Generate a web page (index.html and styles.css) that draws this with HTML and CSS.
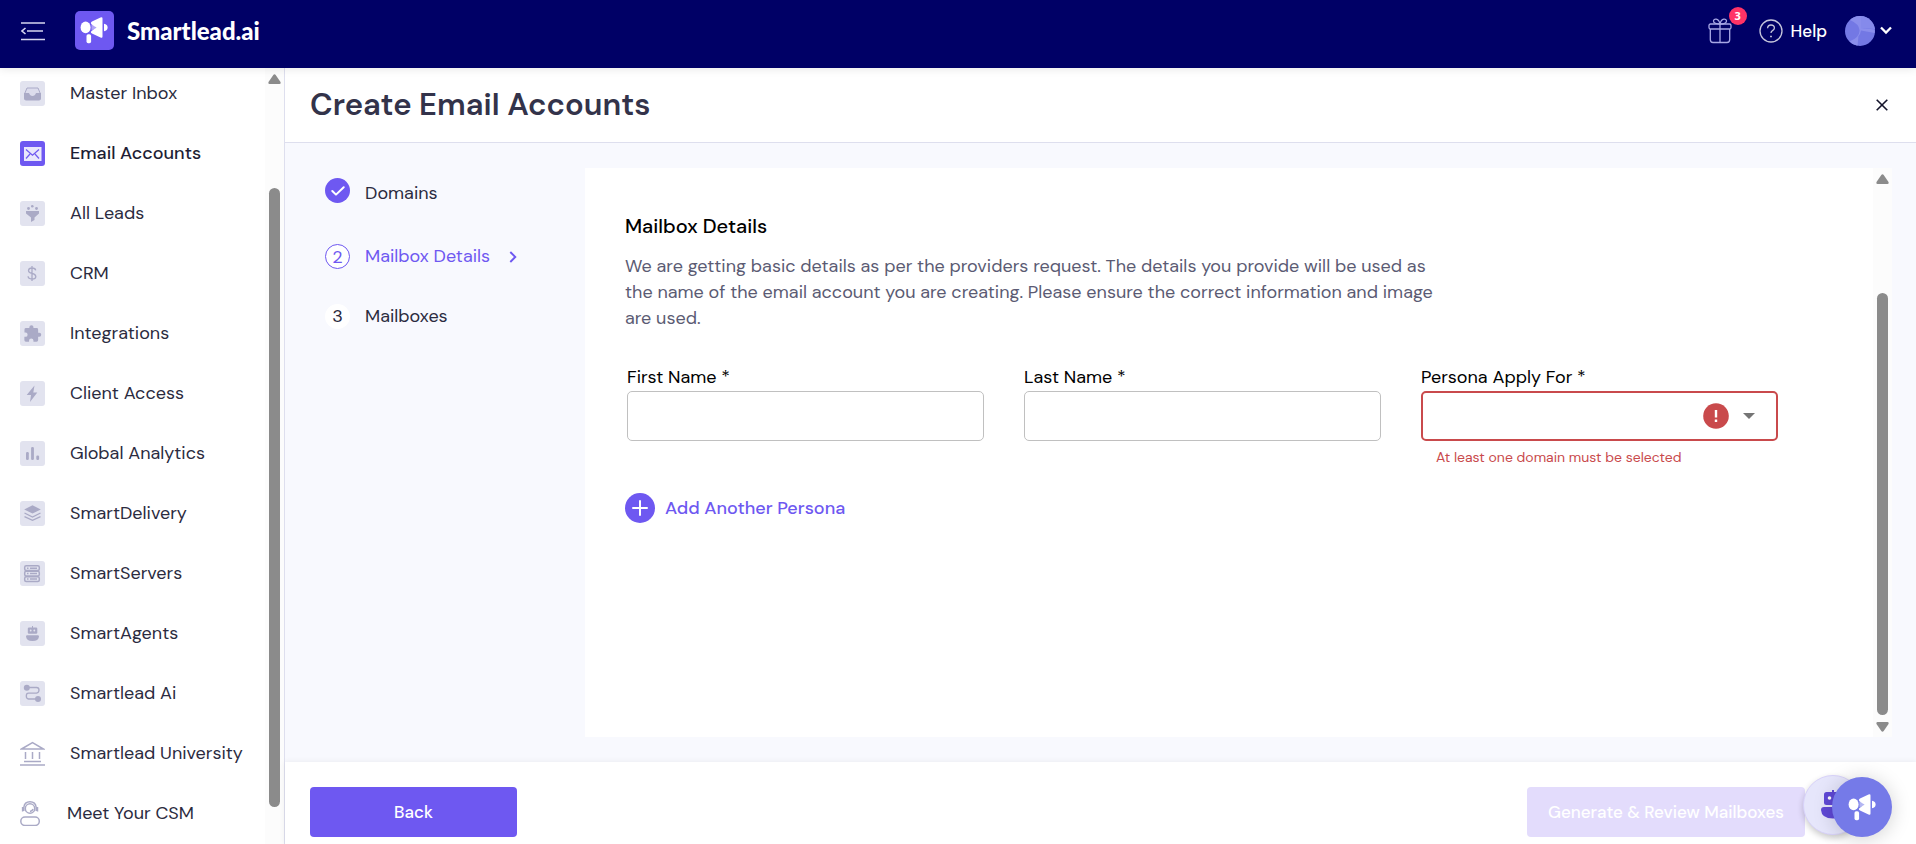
FILE: index.html
```html
<!DOCTYPE html>
<html lang="en">
<head>
<meta charset="utf-8">
<title>Create Email Accounts</title>
<link rel="stylesheet" href="styles.css">
</head>
<body>
<svg class="defs" aria-hidden="true">
  <symbol id="megaphone" viewBox="0 0 28 28">
    <ellipse cx="5.600" cy="11.400" rx="5" ry="5.900"/>
    <path d="M20.500 1.500Q22.500.5 22.500 2.500V20.500Q22.500 22.500 20.500 21.500L12 17.500Q10.500 16.700 11 15.700Q11.500 14.800 16.500 11.600Q11.500 8.500 11 7.400Q10.700 6.400 12 5.600Z"/>
    <path d="M11.500 8.500Q14 7.500 16.500 11.200Q14 14.500 11.500 13.800Z" opacity=".45"/>
    <path d="M24 7.800Q27.600 8.300 27.600 11.500T24 15.300Z"/>
    <rect x="6.500" y="18.200" width="4.600" height="9" rx="1.700"/>
  </symbol>
</svg>
<header class="topbar">
  <div class="topbar-left">
    <button class="plain" type="button" aria-label="Collapse menu">
      <svg width="24" height="20" viewBox="0 0 24 20" fill="none" stroke="#d5d5f0" stroke-width="1.600"><path d="M0 2H24M6 10H22M0 18.500H24M4.500 7 1 10 4.500 13"/></svg>
    </button>
    <a class="brand" href="#">
      <span class="brand-mark"><svg width="28" height="28" fill="#fff"><use href="#megaphone"/></svg></span>
      <span>Smartlead.ai</span>
    </a>
  </div>
  <div class="topbar-right">
    <button class="plain gift" type="button" aria-label="Rewards">
      <svg width="24" height="26" viewBox="0 0 24 26" fill="none" stroke="#a8a8e6" stroke-width="1.300"><rect x="1" y="6" width="22" height="5" rx="1.500"/><path d="M2.300 11V21.500Q2.300 24.500 5 24.500H19Q21.700 24.500 21.700 21.500V11M12 6V24.500M12 6C8 6 5.500 5 5.500 3C5.500 .5 10.500-.5 12 6C13.500-.5 18.500 .5 18.500 3C18.500 5 16 6 12 6"/></svg>
      <span class="badge">3</span>
    </button>
    <a class="help" href="#">
      <svg width="24" height="24" viewBox="0 0 24 24" fill="none" stroke="#c6c6dc" stroke-width="1.300"><circle cx="12" cy="12" r="11"/><path d="M8.600 9.300Q8.700 6 12 6T15.400 9Q15.400 10.600 13.500 11.600Q12 12.400 12 14"/><path d="M12 16.700V18.200" stroke-width="1.800"/></svg>
      <span>Help</span>
    </a>
    <button class="plain account" type="button" aria-label="Account">
      <svg width="30" height="30" viewBox="0 0 30 30"><circle cx="15" cy="15" r="15" fill="#7378e4"/><path d="M5 4A15 15 0 0 1 16 0V12L29.700 13.500V17L16 14.500Q15.500 18 13.500 20L12.500 29.800Q8 29 4.500 25.500Q15 21 14.500 14Q14 8 5 4Z" fill="#8a8eec"/><path d="M16 0A15 15 0 0 1 30 13L16 12Z" fill="#858aeb"/></svg>
      <svg width="12" height="9" viewBox="0 0 12 9" fill="none" stroke="#fff" stroke-width="2.300"><path d="M1 1.500 6 6.500 11 1.500"/></svg>
    </button>
  </div>
</header>
<div class="shell">
  <aside class="sidebar">
    <nav class="menu" aria-label="Main">
      <a href="#"><span class="tile"><svg viewBox="0 0 25 25"><path d="M7 7H18L20.500 13V17.500Q20.500 19 19 19H6Q4.500 19 4.500 17.500V13Z" fill="#dcdcec" stroke="#aaaac8"/><path d="M4 12H9Q10 15 12.500 15T16 12H21V17Q21 19 19 19H6Q4 19 4 17Z"/></svg></span>Master Inbox</a>
      <a href="#" class="current" aria-current="page"><span class="tile"><svg viewBox="0 0 25 25"><rect x="4" y="6" width="17.500" height="14" fill="#e9e7fc"/><path d="M6 8.500 12.500 14.300 19 8.500M6 17.500 10 13M19 17.500 15 13" fill="none" stroke="#6e58f1" stroke-width="1.200"/></svg></span>Email Accounts</a>
      <a href="#"><span class="tile"><svg viewBox="0 0 25 25"><path d="M6 10H19V12.500L14.500 16.500V19L11 21V16.500L6 12.500Z"/><circle cx="8.500" cy="7.500" r="1.400"/><circle cx="12.300" cy="5.200" r="1.300"/><circle cx="16.500" cy="7.500" r="1.400"/></svg></span>All Leads</a>
      <a href="#"><span class="tile"><svg viewBox="0 0 25 25"><path d="M15.700 9.300Q15.300 7 12 7T8.500 9.500Q8.500 11.700 12 12.400T15.800 15.400Q15.800 18 12 18T8.100 15.300M12 5V20" fill="none" stroke="#aaaac6" stroke-width="1.300"/></svg></span>CRM</a>
      <a href="#"><span class="tile"><svg viewBox="0 0 24 24"><path d="M18.500 11.200H17.400V8.200Q17.400 6.800 16 6.800H12.900V5.800Q12.900 4 11 4T9 5.800V6.800H5.800Q4.300 6.800 4.300 8.200V11H5.300Q7.300 11 7.300 13.100T5.300 15.200H4.200V18.300Q4.200 19.800 5.700 19.800H8.700V18.700Q8.700 16.700 10.800 16.700T12.900 18.700V19.800H15.900Q17.400 19.800 17.400 18.300V15.200H18.500Q20.400 15.200 20.400 13.200T18.500 11.200Z"/></svg></span>Integrations</a>
      <a href="#"><span class="tile"><svg viewBox="0 0 25 25"><path d="M14.500 4.500 6.700 14H11L10 21 17.300 11.500H13.300Z"/></svg></span>Client Access</a>
      <a href="#"><span class="tile"><svg viewBox="0 0 25 25"><rect x="6" y="11" width="2.800" height="8" rx="1.200"/><rect x="11.100" y="6" width="2.800" height="13" rx="1.200"/><rect x="16.300" y="14.500" width="2.800" height="4.500" rx="1.200"/></svg></span>Global Analytics</a>
      <a href="#"><span class="tile"><svg viewBox="0 0 25 25"><path d="M12.500 4.300 20.800 8.400 12.500 12.600 4.200 8.400Z"/><path d="M4.500 12 12.500 16 20.500 12M4.500 15.700 12.500 19.400 20.500 15.700" fill="none" stroke="#aaaac6" stroke-width="1.300"/></svg></span>SmartDelivery</a>
      <a href="#"><span class="tile"><svg viewBox="0 0 25 25"><g fill="none" stroke="#aaaac6" stroke-width="1.500"><rect x="4.700" y="4.800" width="14.600" height="4.600" rx="1.500"/><rect x="4.700" y="10.300" width="14.600" height="4.600" rx="1.500"/><rect x="4.700" y="15.800" width="14.600" height="4.600" rx="1.500"/><path d="M7 7.200H8.500M10 7.200H17M7 12.600H8.500M10 12.600H17M7 18.100H8.500M10 18.100H17"/></g></svg></span>SmartServers</a>
      <a href="#"><span class="tile"><svg viewBox="0 0 25 25"><rect x="7.800" y="6.500" width="9.500" height="6.200" rx="1.200"/><path d="M12 5H13V7H12ZM6 15.500Q6 14.200 7.300 14.200H17.700Q19 14.200 19 15.500Q18.500 20 12.500 20T6 15.500Z"/><circle cx="10.700" cy="9.500" r=".9" fill="#e2e3ef"/><circle cx="14.300" cy="9.500" r=".9" fill="#e2e3ef"/></svg></span>SmartAgents</a>
      <a href="#"><span class="tile"><svg viewBox="0 0 25 25"><circle cx="6.800" cy="6.800" r="3"/><circle cx="18" cy="18" r="3"/><path d="M8 6.500H16.500Q19 6.500 19 9T16.500 12.200H8.500Q6.300 12.200 6.300 15T8.500 18H17" fill="none" stroke="#aaaac6" stroke-width="1.300"/></svg></span>Smartlead Ai</a>
      <a href="#"><svg class="outline" viewBox="0 0 25 25"><path d="M1.500 8 12.500 1.500 23.500 8ZM5.500 11V18M12.500 11V18M19.500 11V18M4 20.500H21M0 24H25"/></svg>Smartlead University</a>
      <a href="#" class="csm"><svg class="outline" viewBox="0 0 25 25"><rect x=".8" y="16" width="18.500" height="8.500" rx="4.200"/><circle cx="10" cy="7.500" r="4.700"/><path d="M3.800 10V6.500Q4.500 .8 10 .8T16.200 6.500V10M2.600 6V10.500M17.500 6V10.500M10 10.500Q12.500 10 13 8"/></svg>Meet Your CSM</a>
    </nav>
    <div class="scroll sidebar-scroll" aria-hidden="true">
      <svg width="13" height="10" viewBox="0 0 13 10"><path d="M5.300 1Q6.500-.5 7.700 1L12.500 8Q13 10 11.500 10H1.500Q0 10 .5 8Z"/></svg>
      <span class="space"></span><span class="thumb"></span><span class="rest"></span>
    </div>
  </aside>
  <main class="page">
    <div class="page-head">
      <h1>Create Email Accounts</h1>
      <button class="plain" type="button" aria-label="Close"><svg width="12" height="12" viewBox="0 0 12 12" fill="none" stroke="#14142b" stroke-width="1.600"><path d="M.7.7 11.300 11.300M11.300.7.7 11.300"/></svg></button>
    </div>
    <div class="page-body">
      <ol class="steps">
        <li class="complete"><span class="dot"><svg width="14" height="10" viewBox="0 0 14 10" fill="none" stroke="#fff" stroke-width="2" stroke-linecap="round" stroke-linejoin="round"><path d="M1.300 5 5 8.600 12.700 1.200"/></svg></span>Domains</li>
        <li class="active" aria-current="step"><span class="dot">2</span>Mailbox Details<svg class="arrow" width="8" height="12" viewBox="0 0 8 12" fill="none" stroke="#6e58f1" stroke-width="1.900"><path d="M1.300 1 6.300 6 1.300 11"/></svg></li>
        <li><span class="dot">3</span>Mailboxes</li>
      </ol>
      <section class="card">
        <form class="details" id="details">
          <h2>Mailbox Details</h2>
          <p>We are getting basic details as per the providers request. The details you provide will be used as the name of the email account you are creating. Please ensure the correct information and image are used.</p>
          <div class="fields">
            <div class="field"><label for="first">First Name *</label><input id="first" type="text"></div>
            <div class="field"><label for="last">Last Name *</label><input id="last" type="text"></div>
            <div class="field error">
              <label for="persona">Persona Apply For *</label>
              <div class="select">
                <select id="persona" aria-invalid="true" aria-describedby="persona-error"><option></option></select>
                <span class="marks"><svg width="26" height="26" viewBox="0 0 26 26"><circle cx="13" cy="13" r="12.800" fill="#c94a4c"/><path d="M11.800 7H14.200V14.500H11.800ZM11.800 16.500H14.200V19H11.800Z" fill="#fff"/></svg><svg width="12" height="6" viewBox="0 0 12 6"><path d="M0 0H12L6 6Z" fill="#757575"/></svg></span>
              </div>
              <span class="hint" id="persona-error">At least one domain must be selected</span>
            </div>
          </div>
          <button class="plain add" type="button"><svg width="30" height="30" viewBox="0 0 30 30"><circle cx="15" cy="15" r="15" fill="#6e58f1"/><path d="M8 15H22M15 8V22" stroke="#fff" stroke-width="2" stroke-linecap="round"/></svg>Add Another Persona</button>
        </form>
        <div class="scroll card-scroll" aria-hidden="true">
          <svg width="13" height="10" viewBox="0 0 13 10"><path d="M5.300 1Q6.500-.5 7.700 1L12.500 8Q13 10 11.500 10H1.500Q0 10 .5 8Z"/></svg>
          <span class="space"></span><span class="thumb"></span>
          <svg width="13" height="10" viewBox="0 0 13 10"><path d="M5.300 9Q6.500 10.500 7.700 9L12.500 2Q13 0 11.500 0H1.500Q0 0 .5 2Z"/></svg>
        </div>
      </section>
    </div>
    <footer class="actions">
      <button class="btn back" type="button">Back</button>
      <button class="btn next" type="submit" form="details" disabled>Generate &amp; Review Mailboxes</button>
    </footer>
  </main>
</div>
<button class="fab robot" type="button" aria-label="Assistant"><svg width="30" height="30" viewBox="0 0 30 30" fill="#5f48d6"><rect x="6" y="2" width="18" height="13" rx="2.500"/><path d="M14 0H16V3H14ZM3 20Q3 17 6 17H24Q27 17 27 20Q26.500 28.500 15 28.500T3 20Z"/><circle cx="11.500" cy="8" r="1.800" fill="#fff"/><circle cx="19" cy="8" r="1.800" fill="#fff"/></svg></button>
<button class="fab news" type="button" aria-label="Announcements"><svg width="28" height="28" fill="#fff"><use href="#megaphone"/></svg></button>
</body>
</html>
```
FILE: styles.css
```css
* { box-sizing: border-box; }
html, body { height: 100%; }
body {
  margin: 0;
  display: flex;
  flex-direction: column;
  overflow: hidden;
  font-family: "DM Sans", Inter, "Liberation Sans", sans-serif;
  font-size: 18px;
  line-height: 26px;
  color: #2b2b40;
  background: #fff;
}
svg { display: block; flex: none; }
a { color: inherit; text-decoration: none; }
button, input, select { font: inherit; color: inherit; }
h1, h2, p, ol { margin: 0; padding: 0; }
.defs { position: absolute; width: 0; height: 0; }
.plain { padding: 0; border: 0; background: none; }

.topbar {
  position: relative;
  flex: none;
  height: 68px;
  padding: 0 24px 7px 21px;
  display: flex;
  align-items: center;
  justify-content: space-between;
  background: #000066;
  color: #fff;
  box-shadow: 0 2px 8px rgba(0, 0, 0, .08);
}
.topbar-left { display: flex; align-items: center; gap: 30px; }
.brand { display: flex; align-items: center; gap: 13px; font-family: Lato, sans-serif; font-weight: 900; font-size: 24px; }
.brand-mark { width: 39px; height: 39px; padding: 5px; border-radius: 5px; background: #6e58f1; }
.topbar-right { display: flex; align-items: center; }
.gift { position: relative; }
.badge {
  position: absolute;
  top: -11px;
  right: -15px;
  width: 18px;
  height: 18px;
  border-radius: 50%;
  background: #ff3366;
  font: 700 11px/18px "Open Sans", sans-serif;
  text-align: center;
}
.help { display: flex; align-items: center; gap: 8px; margin: 0 18px 0 27px; font-weight: 500; font-size: 17px; }
.account { display: flex; align-items: center; gap: 5px; }

.shell { flex: 1; min-height: 0; display: flex; }
.sidebar { flex: none; width: 285px; display: flex; border-right: 1px solid #dedfee; overflow: hidden; }
.menu { flex: 1; padding: 13px 0 0 20px; display: flex; flex-direction: column; gap: 35px; }
.menu a { flex: none; height: 25px; display: flex; align-items: center; gap: 25px; line-height: 25px; white-space: nowrap; }
.menu .csm { gap: 22px; }
.menu .current { font-weight: 500; color: #1e1e35; }
.tile { width: 25px; height: 25px; border-radius: 3px; background: #e2e3ef; fill: #aaaac6; }
.current .tile { background: #6e58f1; }
.tile svg, .outline { width: 25px; height: 25px; }
.outline { fill: none; stroke: #aaaac6; stroke-width: 1.500; }

.scroll { flex: none; width: 19px; display: flex; flex-direction: column; align-items: center; padding: 6px 0; background: #fcfcfc; fill: #8b8b8b; }
.thumb { width: 11px; border-radius: 6px; background: #8b8b8b; }
.sidebar-scroll .space { flex: 104; }
.sidebar-scroll .thumb { flex: 619; }
.sidebar-scroll .rest { flex: 31; }
.card-scroll { padding-bottom: 5px; }
.card-scroll .space { flex: 109; }
.card-scroll .thumb { flex: 422; margin-bottom: 7px; }

.page { flex: 1; min-width: 0; display: flex; flex-direction: column; }
.page-head { flex: none; height: 75px; padding: 0 28px 0 25px; display: flex; align-items: center; justify-content: space-between; border-bottom: 1px solid #dedfee; }
h1 { font-size: 31px; line-height: 40px; font-weight: 600; color: #33334a; }
.page-body { flex: 1; min-height: 0; padding: 25px 24px 25px 0; display: flex; background: #f8f9fe; }
.steps { flex: none; width: 300px; padding: 10px 0 0 40px; list-style: none; }
.steps li { height: 25px; margin-bottom: 35px; display: flex; align-items: center; gap: 15px; line-height: 25px; }
.steps .complete { height: 30px; margin-bottom: 36px; align-items: flex-start; line-height: 30px; }
.steps .active { color: #6e58f1; }
.dot { width: 25px; height: 25px; border-radius: 50%; background: #fff; display: grid; place-items: center; }
.complete .dot { background: #6e58f1; }
.active .dot { border: 1px solid #6e58f1; }
.arrow { margin-left: 4px; }

.card { flex: 1; min-width: 0; display: flex; background: #fff; }
.details { flex: 1; padding: 45px 40px 0; }
h2 { margin-bottom: 14px; font-size: 20px; line-height: 26px; font-weight: 500; color: #000; }
p { max-width: 820px; color: #5b5b73; }
.fields { padding: 33px 55px 0 2px; display: grid; grid-template-columns: repeat(3, 1fr); gap: 40px; }
.field { min-width: 0; display: flex; flex-direction: column; color: #000; }
.field label { margin-bottom: 1px; }
.field input, .field select { width: 100%; height: 50px; padding: 0 16px; border: 1px solid #c0c0c0; border-radius: 5px; background: #fff; }
.select { position: relative; }
.error select { appearance: none; border: 2px solid #c94a4c; }
.marks { position: absolute; top: 0; bottom: 0; right: 23px; display: flex; align-items: center; gap: 14px; pointer-events: none; }
.hint { margin: 4px 0 0 15px; font-size: 14px; line-height: 24px; color: #c94a4c; }
.add { margin-top: 24px; display: flex; align-items: center; gap: 10px; font-weight: 500; color: #6e58f1; }

.actions { flex: none; height: 82px; padding: 25px 111px 0 25px; display: flex; justify-content: space-between; position: relative; background: #fff; box-shadow: 0 0 6px rgba(0, 0, 0, .07); }
.btn { height: 50px; border: 0; border-radius: 4px; color: #fff; font-size: 17px; font-weight: 500; background: #6e58f1; }
.back { width: 207px; }
.next { width: 278px; background: #e3dcfc; }

.fab { position: absolute; width: 60px; height: 60px; padding: 0; border: 0; border-radius: 50%; display: grid; place-items: center; }
.robot { right: 53px; bottom: 9px; background: #e6e6fb; border: 1px solid #d8d2fa; box-shadow: 0 3px 6px rgba(0, 0, 0, .2); }
.news { right: 24px; bottom: 7px; background: #757ae8; box-shadow: 0 2px 20px rgba(0, 0, 0, .18); }
```
